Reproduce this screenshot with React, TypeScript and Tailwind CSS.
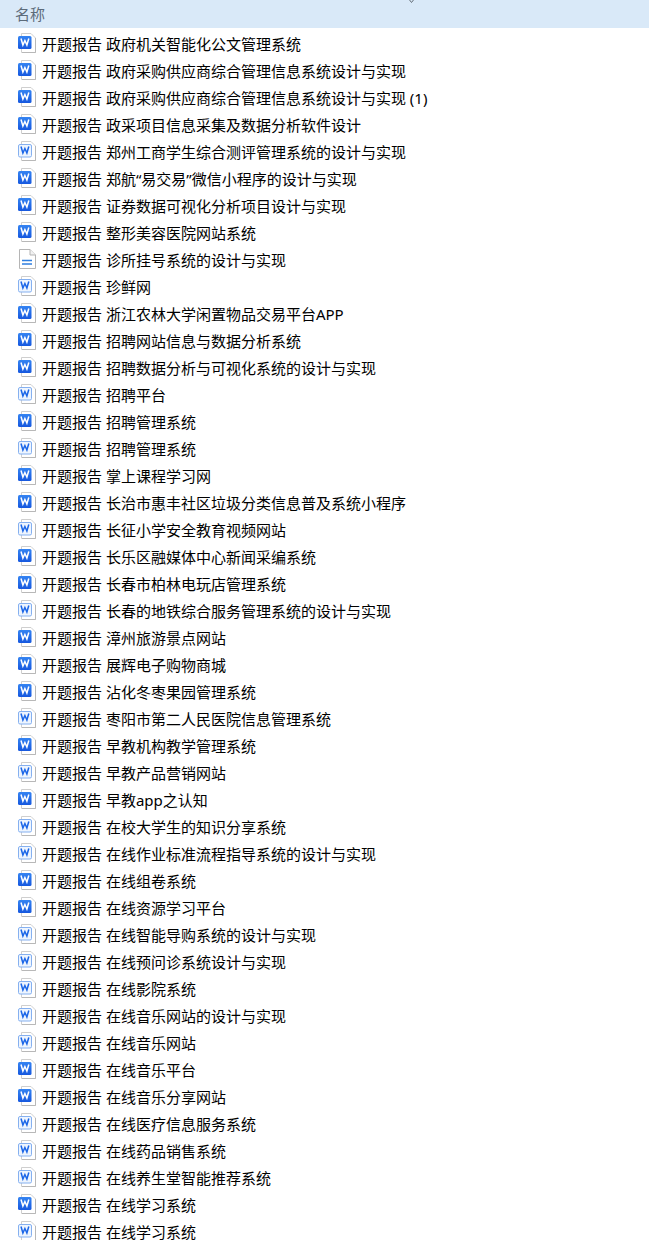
const files: [string, string][] = [
  ["s", "政府机关智能化公文管理系统"],
  ["s", "政府采购供应商综合管理信息系统设计与实现"],
  ["s", "政府采购供应商综合管理信息系统设计与实现 (1)"],
  ["s", "政采项目信息采集及数据分析软件设计"],
  ["l", "郑州工商学生综合测评管理系统的设计与实现"],
  ["s", "郑航“易交易”微信小程序的设计与实现"],
  ["s", "证券数据可视化分析项目设计与实现"],
  ["s", "整形美容医院网站系统"],
  ["t", "诊所挂号系统的设计与实现"],
  ["l", "珍鲜网"],
  ["s", "浙江农林大学闲置物品交易平台APP"],
  ["s", "招聘网站信息与数据分析系统"],
  ["s", "招聘数据分析与可视化系统的设计与实现"],
  ["l", "招聘平台"],
  ["s", "招聘管理系统"],
  ["l", "招聘管理系统"],
  ["s", "掌上课程学习网"],
  ["s", "长治市惠丰社区垃圾分类信息普及系统小程序"],
  ["l", "长征小学安全教育视频网站"],
  ["s", "长乐区融媒体中心新闻采编系统"],
  ["s", "长春市柏林电玩店管理系统"],
  ["l", "长春的地铁综合服务管理系统的设计与实现"],
  ["s", "漳州旅游景点网站"],
  ["s", "展辉电子购物商城"],
  ["s", "沾化冬枣果园管理系统"],
  ["l", "枣阳市第二人民医院信息管理系统"],
  ["s", "早教机构教学管理系统"],
  ["l", "早教产品营销网站"],
  ["s", "早教app之认知"],
  ["l", "在校大学生的知识分享系统"],
  ["l", "在线作业标准流程指导系统的设计与实现"],
  ["s", "在线组卷系统"],
  ["s", "在线资源学习平台"],
  ["l", "在线智能导购系统的设计与实现"],
  ["l", "在线预问诊系统设计与实现"],
  ["l", "在线影院系统"],
  ["l", "在线音乐网站的设计与实现"],
  ["l", "在线音乐网站"],
  ["s", "在线音乐平台"],
  ["s", "在线音乐分享网站"],
  ["l", "在线医疗信息服务系统"],
  ["l", "在线药品销售系统"],
  ["l", "在线养生堂智能推荐系统"],
  ["s", "在线学习系统"],
  ["l", "在线学习系统"],
];

function FileIcon({ kind }: { kind: string }) {
  if (kind === "t") {
    return (
      <svg width="20" height="20" viewBox="0 0 20 20" className="block">
        <path d="M1.5 .5H12L17.5 6V19.5H1.5Z" fill="#fff" stroke="#b5b5b5" />
        <path d="M12 .5V6H17.5" fill="#f2f2f2" stroke="#b5b5b5" />
        <path d="M4 11.5H14M4 15H14" stroke="#2f7fe0" strokeWidth="1.3" />
      </svg>
    );
  }
  const solid = kind === "s";
  return (
    <svg width="20" height="20" viewBox="0 0 20 20" className="block">
      <defs>
        <linearGradient id="wordBlue" x1="0" y1="0" x2="0" y2="1">
          <stop offset="0" stopColor="#3584f2" />
          <stop offset="1" stopColor="#1658df" />
        </linearGradient>
      </defs>
      <path d="M3.5 .5H13L17.5 5V19.5H3.5Z" fill="#fff" stroke="#cfcfcf" />
      <path d="M4 19.5H17.5V5" fill="none" stroke="#b8b8b8" />
      {solid ? (
        <rect x="0" y="3" width="13.5" height="13" rx="1.5" fill="url(#wordBlue)" />
      ) : (
        <rect x=".5" y="3.5" width="13" height="12.5" rx="1.5" fill="#eef5fe" stroke="#85b0f0" />
      )}
      <path
        d="M3 5.5L4.9 12L6.9 7.5L8.9 12L10.8 5.5"
        fill="none"
        stroke={solid ? "#fff" : "#1b66e8"}
        strokeWidth="1.5"
      />
    </svg>
  );
}

export default function App() {
  return (
    <main className="w-[649px] h-[1240px] overflow-hidden bg-white" style={{ fontFamily: '"Noto Sans", "Noto Sans CJK SC", sans-serif' }}>
      {/* Header */}
      <div className="relative h-[28px] bg-[#d9e9f8] pl-[15px] flex items-center text-[15px] text-[#5c6b7a]">
        名称
        <svg width="9" height="4" viewBox="0 0 9 4" className="absolute left-[407px] top-0">
          <path d="M1 -2L4.5 2.5L8 -2" fill="none" stroke="#66707a" />
        </svg>
      </div>

      {/* File list */}
      <div className="pt-[3px]">
        {files.map(([kind, name], i) => (
          <div key={i} className="h-[27px] flex items-center pl-[18px] gap-[4px] text-[15px] leading-[15px] text-black whitespace-pre">
            <div className="self-start mt-[2px] shrink-0">
              <FileIcon kind={kind} />
            </div>
            <span>开题报告 {name}</span>
          </div>
        ))}
      </div>
    </main>
  );
}
